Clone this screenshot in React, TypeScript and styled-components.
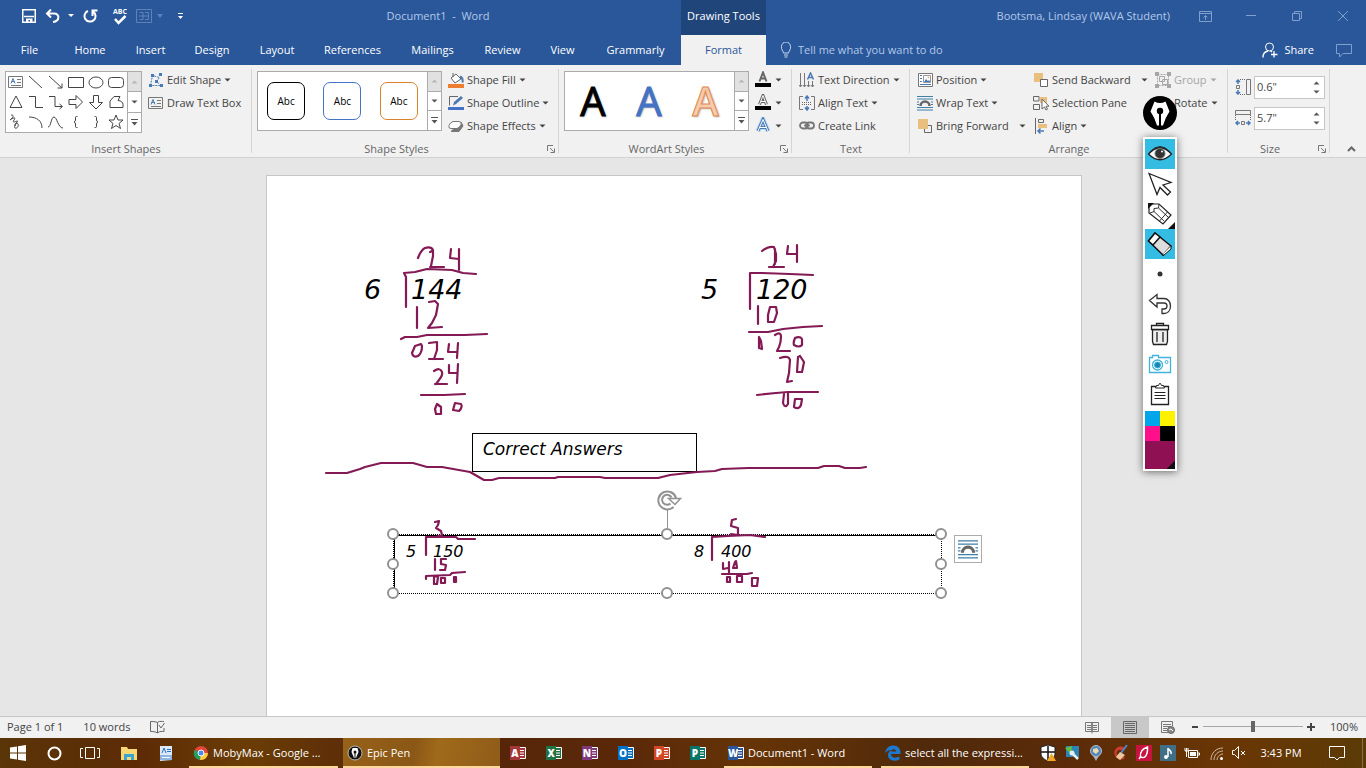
import React from "react";
import styled, { createGlobalStyle } from "styled-components";

const GlobalStyle = createGlobalStyle`
  * { box-sizing: border-box; }
  body { margin: 0; background: #e6e6e6; font: 11px/16px "Open Sans", "Noto Sans", sans-serif; color: #444; }
  button, input { font: inherit; color: inherit; margin: 0; }
  svg { display: block; flex: none; }
`;

const Window = styled.div`
  display: flex;
  flex-direction: column;
  min-height: 100vh;
  position: relative;
  overflow: hidden;
`;

const PlainButton = styled.button`
  display: flex;
  align-items: center;
  justify-content: center;
  padding: 0;
  border: 0;
  background: none;
  white-space: nowrap;
`;

/* ---------- title bar and tabs ---------- */

const TitleBar = styled.header`
  display: flex;
  height: 35px;
  background: #2a579a;
  color: #b3c8e8;
`;
const TitleLeft = styled.div`
  display: flex;
  flex: none;
  width: 681px;
`;
const QuickAccess = styled.div`
  display: flex;
  width: 195px;
  height: 32px;
  padding-left: 19px;
`;
const QuickButton = styled(PlainButton)<{ $w: number }>`
  width: ${(p) => p.$w}px;
  color: #fff;
`;
const DocTitle = styled.div`
  flex: 1;
  line-height: 32px;
  text-align: center;
  white-space: pre;
`;
const ContextTitle = styled.div`
  width: 85px;
  background: #20457b;
  color: #fff;
  line-height: 32px;
  text-align: center;
  white-space: nowrap;
`;
const UserName = styled.div`
  flex: 1;
  padding-right: 12px;
  line-height: 32px;
  text-align: right;
`;
const WindowButton = styled(PlainButton)`
  width: 46px;
  height: 32px;
  color: #7f9fcf;
`;
const TabBar = styled.nav`
  display: flex;
  height: 30px;
  background: #2a579a;
  color: #fff;
`;
const Tab = styled(PlainButton)<{ $w: number; $active?: boolean }>`
  width: ${(p) => p.$w}px;
  background: ${(p) => (p.$active ? "#f1f1f1" : "none")};
  color: ${(p) => (p.$active ? "#2a579a" : "#fff")};
`;
const TellMe = styled.label`
  display: flex;
  flex: 1;
  align-items: center;
  gap: 6px;
  padding-left: 14px;
`;
const TellInput = styled.input`
  width: 200px;
  padding: 0;
  border: 0;
  outline: 0;
  background: none;
  &::placeholder { color: #b3c8e8; opacity: 1; }
`;
const ShareButton = styled(PlainButton)`
  gap: 6px;
  margin-right: 22px;
  color: #fff;
`;
const CommentButton = styled(PlainButton)`
  margin-right: 14px;
  color: #7f9fcf;
`;

/* ---------- ribbon ---------- */

const Ribbon = styled.section`
  display: flex;
  height: 93px;
  background: #f1f1f1;
  border-bottom: 1px solid #d2d2d2;
`;
const Group = styled.div<{ $w: number }>`
  position: relative;
  display: flex;
  flex-direction: column;
  flex: none;
  width: ${(p) => p.$w}px;
  padding-top: 3px;
  &::after {
    content: "";
    position: absolute;
    right: 0;
    top: 4px;
    bottom: 4px;
    width: 1px;
    background: #d5d5d5;
  }
`;
const GroupBody = styled.div<{ $left: number; $centered?: boolean }>`
  display: flex;
  align-items: ${(p) => (p.$centered ? "center" : "flex-start")};
  height: 69px;
  padding-left: ${(p) => p.$left}px;
`;
const GroupFooter = styled.div<{ $launcher?: boolean }>`
  display: flex;
  align-items: center;
  height: 16px;
  margin-top: 4px;
  padding-right: ${(p) => (p.$launcher ? 4 : 0)}px;
  color: #666;
`;
const GroupName = styled.span<{ $launcher?: boolean }>`
  flex: 1;
  padding-right: ${(p) => (p.$launcher ? 6 : 0)}px;
  text-align: center;
`;
const Column = styled.div<{ $w?: number; $gap?: number }>`
  display: flex;
  flex-direction: column;
  align-items: flex-start;
  width: ${(p) => (p.$w ? p.$w + "px" : "auto")};
  margin-left: ${(p) => p.$gap || 0}px;
`;
const CommandButton = styled(PlainButton)<{ $muted?: boolean }>`
  width: 100%;
  justify-content: flex-start;
  gap: 3px;
  height: 23px;
  color: ${(p) => (p.$muted ? "#a6a6a6" : "#444")};
`;
const SplitCaret = styled.span`
  margin-left: auto;
`;
const Gallery = styled.div<{ $w: number; $h: number }>`
  display: flex;
  width: ${(p) => p.$w}px;
  height: ${(p) => p.$h}px;
  margin-top: 3px;
  border: 1px solid #ababab;
  background: #fff;
`;
const GalleryItems = styled.div`
  display: flex;
  flex: 1;
  align-items: center;
  justify-content: space-around;
  color: #000;
`;
const ShapeGrid = styled.div`
  display: grid;
  flex: 1;
  grid-template-columns: repeat(6, 20px);
  grid-template-rows: repeat(3, 20px);
`;
const GalleryScroll = styled.div`
  display: flex;
  flex-direction: column;
  width: 14px;
  border-left: 1px solid #ababab;
`;
const ScrollButton = styled(PlainButton)<{ $off?: boolean }>`
  flex: 1;
  background: ${(p) => (p.$off ? "#e1e1e1" : "#fff")};
  color: ${(p) => (p.$off ? "#b8b8b8" : "#555")};
  & + & { border-top: 1px solid #ababab; }
`;
const StyleSwatch = styled(PlainButton)<{ $line: string }>`
  width: 38px;
  height: 38px;
  border: 1px solid ${(p) => p.$line};
  border-radius: 7px;
  background: #fff;
  color: #000;
  font-size: 10px;
`;
const ArtLetter = styled(PlainButton)<{ $fill: string; $line?: string }>`
  height: 50px;
  color: ${(p) => p.$fill};
  font-size: 40px;
  font-weight: ${(p) => (p.$line ? 600 : 400)};
  line-height: 50px;
  text-shadow: 1px 1px 2px #aaa;
  -webkit-text-stroke: 1px ${(p) => p.$line || p.$fill};
`;
const SizeRow = styled.label`
  display: flex;
  align-items: center;
  gap: 3px;
  height: 31px;
`;
const SizeBox = styled.span`
  display: flex;
  width: 71px;
  height: 23px;
  border: 1px solid #c6c6c6;
  background: #fff;
`;
const SizeInput = styled.input`
  width: 58px;
  padding: 0 2px;
  border: 0;
  outline: 0;
  background: none;
`;
const Stepper = styled.span`
  display: flex;
  flex-direction: column;
  justify-content: center;
  gap: 5px;
  color: #555;
`;
const CollapseButton = styled(PlainButton)`
  align-self: flex-end;
  width: 20px;
  height: 16px;
  margin: 0 5px 0 auto;
`;

/* ---------- document ---------- */

const Workspace = styled.main`
  display: flex;
  flex: 1;
  justify-content: center;
  padding: 17px 18px 0 0;
`;
const Page = styled.article`
  position: relative;
  width: 816px;
  min-height: 541px;
  border: 1px solid #c6c6c6;
  border-bottom: 0;
  background: #fff;
  color: #000;
  font-family: "DejaVu Sans", sans-serif;
  font-style: italic;
`;
const Figure = styled.span<{ $x: number; $y: number; $size: number }>`
  position: absolute;
  left: ${(p) => p.$x}px;
  top: ${(p) => p.$y}px;
  font-size: ${(p) => p.$size}px;
  line-height: 36px;
`;
const TextBox = styled.div`
  position: absolute;
  left: 205px;
  top: 257px;
  width: 225px;
  height: 39px;
  padding: 2px 10px;
  border: 1px solid #000;
  font-size: 17px;
  line-height: 26px;
  white-space: nowrap;
`;
const SelectedBox = styled.div`
  position: absolute;
  left: 126px;
  top: 358px;
  width: 549px;
  height: 60px;
  border: 1px dotted #000;
  box-shadow: inset 1px 1px 0 #000;
`;
const Handle = styled.span<{ $x: number; $y: number }>`
  position: absolute;
  left: ${(p) => p.$x}px;
  top: ${(p) => p.$y}px;
  width: 12px;
  height: 12px;
  border: 2px solid #919191;
  border-radius: 50%;
  background: #fff;
`;
const RotateHandle = styled.svg`
  position: absolute;
  left: 387px;
  top: 312px;
`;
const LayoutOptions = styled(PlainButton)`
  position: absolute;
  left: 687px;
  top: 359px;
  width: 28px;
  height: 28px;
  border: 1px solid #ababab;
  background: #fff;
`;
const Ink = styled.svg`
  position: absolute;
  left: 0;
  top: 0;
  pointer-events: none;
`;

/* ---------- floating pen palette ---------- */

const Palette = styled.aside`
  position: absolute;
  top: 96px;
  right: 189px;
  display: flex;
  flex-direction: column;
  align-items: center;
  gap: 7px;
`;
const PaletteTools = styled.div`
  display: flex;
  flex-direction: column;
  width: 34px;
  padding: 2px;
  background: #fff;
  box-shadow: 0 1px 8px rgba(0, 0, 0, 0.55);
`;
const PaletteButton = styled(PlainButton)<{ $on?: boolean }>`
  height: 30px;
  background: ${(p) => (p.$on ? "#35bce2" : "#fff")};
`;
const Swatches = styled.div`
  display: grid;
  grid-template-columns: 1fr 1fr;
  grid-template-rows: 15px 15px 28px;
  margin-top: 2px;
`;
const Swatch = styled.button<{ $c: string; $wide?: boolean }>`
  padding: 0;
  border: 0;
  background: ${(p) => p.$c};
  grid-column: ${(p) => (p.$wide ? "1 / 3" : "auto")};
`;

/* ---------- status bar ---------- */

const StatusBar = styled.footer`
  display: flex;
  align-items: center;
  height: 22px;
  padding: 0 8px 2px 7px;
  border-top: 1px solid #c6c6c6;
  background: #f1f1f1;
`;
const StatusText = styled.span`
  margin-right: 20px;
`;
const ViewButton = styled(PlainButton)<{ $on?: boolean }>`
  width: 38px;
  height: 21px;
  margin-bottom: -2px;
  background: ${(p) => (p.$on ? "#c8c8c8" : "none")};
`;
const ZoomButton = styled(PlainButton)`
  width: 16px;
  height: 20px;
`;
const ZoomSlider = styled.input`
  appearance: none;
  width: 100px;
  height: 12px;
  background: linear-gradient(#a6a6a6, #a6a6a6) center / 100% 1px no-repeat;
  &::-webkit-slider-thumb { appearance: none; width: 4px; height: 11px; background: #666; }
`;
const ZoomValue = styled.span`
  width: 39px;
  text-align: right;
`;

/* ---------- task bar ---------- */

const TaskBar = styled.footer`
  display: flex;
  height: 30px;
  background: linear-gradient(90deg, #5a3507 0, #5c2b06 10%, #6b3d05 18%, #54240a 30%, #5a2809 45%, #663406 55%, #4f2a0b 68%, #5b2b09 78%, #6a3604 90%, #5b3b06 100%);
  color: #fff;
`;
const TaskIcon = styled(PlainButton)<{ $w?: number }>`
  width: ${(p) => p.$w || 36}px;
`;
const TaskButton = styled(PlainButton)<{ $w: number; $gap: number; $on?: boolean }>`
  justify-content: flex-start;
  gap: 4px;
  width: ${(p) => p.$w}px;
  margin-left: ${(p) => p.$gap}px;
  padding: 2px 0 0 4px;
  border-bottom: 2px solid #fcd89c;
  background: ${(p) => (p.$on ? "linear-gradient(100deg, #976219, #8a5716 45%, #a06a1a 60%, #8f5c1a)" : "none")};
  color: #fff;
`;
const Tray = styled.div`
  display: flex;
  align-items: center;
  margin-left: auto;
`;
const Clock = styled.span`
  width: 62px;
  line-height: 30px;
  text-align: center;
`;
const ShowDesktop = styled(PlainButton)`
  width: 4px;
  height: 30px;
  border-left: 1px solid #8b6c47;
`;

/* ---------- drawings ---------- */

type SvgProps = { w?: number; h?: number; box?: string; children: React.ReactNode };
const Icon = ({ w = 16, h = 16, box, children }: SvgProps) => (
  <svg width={w} height={h} viewBox={box || `0 0 ${w} ${h}`} fill="none" stroke="currentColor" strokeWidth="1" aria-hidden="true">
    {children}
  </svg>
);
const Caret = () => (
  <Icon w={7} h={4}><path d="M.5 .5h6L3.5 3.5z" fill="currentColor" stroke="none" /></Icon>
);
const CaretUp = () => (
  <Icon w={7} h={4}><path d="M.5 3.5h6L3.5 .5z" fill="currentColor" stroke="none" /></Icon>
);
const MoreCaret = () => (
  <Icon w={7} h={7}><path d="M0 .5h7" /><path d="M.5 3h6L3.5 6.5z" fill="currentColor" stroke="none" /></Icon>
);
const Launcher = () => (
  <Icon w={8} h={8}><path d="M.5 6V.5H6M3 3l3.5 3.5M7.5 3.5v4h-4" stroke="#777" /></Icon>
);

const blue = "#4a7ab5";
const tan = "#e8bf7c";

const shapes = [
  <><path d="M.5 2.5h14v11H.5zM9 5.5h4M9 8.5h4M3 11.5h10" stroke="#777" /><path d="M3 9.5l2-5 2 5M3.5 7.5h3" stroke={blue} /></>,
  <path d="M1 2l13 12" />,
  <path d="M1 2l13 12M14 9.5V14H9.5" />,
  <path d="M.5 3.5h15v10H.5z" />,
  <ellipse cx="8" cy="8.5" rx="7" ry="5.5" />,
  <rect x=".5" y="3.5" width="15" height="10" rx="3" />,
  <path d="M8 2L2 13.5h12z" />,
  <path d="M1 2.5h6.5v11H15" />,
  <path d="M1 2.5h6v10h7M11.5 10l3 2.5-3 2.5" />,
  <path d="M1 5.5h7v-4l6.5 6.5L8 14.5v-4H1z" />,
  <path d="M5.5 1.5h5v7h4L8 15 1.5 8.5h4z" />,
  <path d="M2 13.5V7l4-4.5h6l-2 4c3 0 5 2 5 4v3z" />,
  <path d="M3 1c5 0 0 4-1 5 4-3 6-3 4 0s1 2 3 1-4 6-2 7 4-2 3-4-4 0-3 2" />,
  <path d="M1 3c8 0 13 4 13 11" />,
  <path d="M0 13c3 0 3-10 6-10s4 11 9 11" />,
  <path d="M9.500 2.500h-1q-1 0-1 1V6q0 1.500-1.500 2 1.500.5 1.500 2v2.500q0 1 1 1h1" />,
  <path d="M6.500 2.500h1q1 0 1 1V6q0 1.500 1.500 2-1.500.5-1.500 2v2.500q0 1-1 1h-1" />,
  <path d="M8 1l2 5h5l-4 3.5 1.5 5L8 11.5l-4.5 3 1.5-5L1 6h5z" />,
];

const EditShapeIcon = () => (
  <Icon><path d="M2.5 13.5l2-10 7 2-3 4 5 4z" strokeDasharray="2 1" stroke={blue} /><path d="M1 12h3v3H1zM3 2h3v3H3zM11 1h3v3h-3zM7 8h3v3H7zM12 12h3v3h-3z" fill={blue} stroke="none" /></Icon>
);
const TextBoxIcon = () => <Icon>{shapes[0]}</Icon>;
const FillIcon = () => (
  <Icon><path d="M3 6l5-4 5 5-6 4zM5 5V1" stroke="#666" fill="#fff" /><path d="M12 4.5c3 1 3 3 2.5 6" stroke={blue} strokeWidth="2" /><path d="M0 12h16v4H0z" fill="#ed7d31" stroke="none" /></Icon>
);
const OutlineIcon = () => (
  <Icon><path d="M10 1.5H1.5v9" stroke="#666" /><path d="M5 10.5l1-3.5 7-6 2 2-7 6z" fill={blue} stroke="none" /><path d="M0 12h16v3H0z" fill="#4472c4" stroke="none" /></Icon>
);
const EffectsIcon = () => (
  <Icon><path d="M3 13.5h8l4-5.500-2-4z" fill="#777" stroke="#777" /><path d="M5 3.5h6q3 0 2 3t-4 4H3q-3 0-2-3t4-4z" fill="#fff" stroke="#777" /></Icon>
);

const smallA = "M4.5 10.5L8 1.5l3.5 9M6 7.5h4";
const largeA = "M3 14L8 2.5 13 14M5 10.5h6";
const LetterIcon = ({ kind }: { kind: "fill" | "line" | "glow" }) => (
  <Icon h={17}>
    {kind === "glow" && <path d={largeA} stroke="#b9d8f3" strokeWidth="5" />}
    <path d={kind === "glow" ? largeA : smallA} stroke={kind === "glow" ? blue : "#666"} strokeWidth={kind === "fill" ? 2 : 3} />
    {kind !== "fill" && <path d={kind === "glow" ? largeA : smallA} stroke="#fff" />}
    {kind !== "glow" && <path d="M0 12h16v4H0z" fill="#000" stroke="none" />}
  </Icon>
);
const DirectionIcon = () => (
  <Icon><path d="M1.5 1v13M5.5 1v13M9.5 9v6M13.5 9v6M0 13l1.5 2L3 13M4 13l1.5 2L7 13M8 13l1.5 2 1.5-2M12 13l1.5 2 1.5-2" stroke="#777" /><path d="M8.5 7.5l3-6.5 3 6.5M10 5.5h3" stroke={blue} strokeWidth="1.5" /></Icon>
);
const AlignTextIcon = () => (
  <Icon><path d="M4 1.5H.5v13H4M12 1.5h3.5v13H12" stroke="#777" /><path d="M3 7.5h10M3 9.5h10" stroke="#666" strokeDasharray="1 1" /><path d="M8 6V1M6 3.5L8 1l2 2.5M8 11v4M6 12.5L8 15l2-2.5" stroke={blue} strokeWidth="1.5" /></Icon>
);
const LinkIcon = () => (
  <Icon><rect x="1" y="4.500" width="8" height="6" rx="3" stroke="#777" strokeWidth="1.8" /><rect x="7" y="4.500" width="8" height="6" rx="3" stroke="#777" strokeWidth="1.8" /><path d="M5 7.500h6" stroke="#777" strokeWidth="1.5" /></Icon>
);
const PositionIcon = () => (
  <Icon><path d="M1.5 1.5h14v13h-14z" stroke="#777" fill="#fff" /><path d="M3 3.5h2M3 6.5h2M3 9.5h2M3 12.5h11" stroke={blue} /><path d="M6.5 3.5h7v7h-7z" stroke="#999" /><path d="M7 10l2-3 2 2 1-1 1.5 2z" fill={blue} stroke="none" /><circle cx="11.5" cy="5.5" r="1" fill={tan} stroke="none" /></Icon>
);
const WrapIcon = ({ size = 16 }: { size?: number }) => (
  <Icon w={size} h={size} box="0 0 16 16"><path d="M0 1.5h16M0 4h16M0 12.5h16M0 15h16M0 7h2M14 7h2M0 9.5h2M14 9.5h2" stroke="#3f7fa8" /><path d="M3.5 11a4.5 4.5 0 019 0" stroke="#666" strokeWidth="2.5" /></Icon>
);
const ForwardIcon = () => (
  <Icon><path d="M7.5 11v3.5h7v-7H11" stroke="#666" /><path d="M1 1h10v10H1z" fill={tan} stroke="none" /></Icon>
);
const BackwardIcon = () => (
  <Icon><path d="M1 1h9v9H1z" fill={tan} stroke="none" /><path d="M7.5 7.5h7v7h-7z" fill="#fff" stroke="#666" /></Icon>
);
const SelectionIcon = () => (
  <Icon><path d="M7 2h7v6H7z" fill={tan} stroke="none" /><path d="M.5 9.5h6v5h-6zM.5 6V1.5H6V6z" stroke="#666" /><path d="M9 4v10l2.5-2 1.5 3 1.5-.8-1.5-3H16z" fill="#fff" stroke="#666" /></Icon>
);
const AlignIcon = () => (
  <Icon><path d="M2.5 0v16M5.5 1.5h5v3h-5z" stroke="#666" /><path d="M5 6h9v4H5z" fill={tan} stroke="none" /><path d="M11 13H5m2.5-2.5L5 13l2.5 2.5" stroke={blue} strokeWidth="1.5" /></Icon>
);
const GroupIcon = () => (
  <Icon><path d="M2.5 2.5h11v11h-11z" strokeDasharray="2 1" /><path d="M4.5 4.5h5v5h-5zM7.5 7.5h5v5h-5z" /><path d="M0 0h4v4H0zM12 0h4v4h-4zM0 12h4v4H0zM12 12h4v4h-4z" fill="currentColor" stroke="none" /></Icon>
);
const HeightIcon = () => (
  <Icon><path d="M5 .5h6M5 15.5h6" strokeDasharray="1 1" stroke="#666" /><path d="M11.5 .5h4v15h-4zM1.5 6.5h3v3h-3z" stroke="#777" /><path d="M3 5V1M1 3l2-2 2 2M3 11v4M1 13l2 2 2-2" stroke={blue} strokeWidth="1.5" /></Icon>
);
const WidthIcon = () => (
  <Icon><path d="M.5 5v6M15.5 5v6" strokeDasharray="1 1" stroke="#666" /><path d="M.5 .5h15v4H.5zM6.5 11.5h3v3h-3z" stroke="#777" /><path d="M5 13H1M3 11l-2 2 2 2M11 13h4M13 11l2 2-2 2" stroke={blue} strokeWidth="1.5" /></Icon>
);

const ink = [
  "M418 258Q421 250 425 248Q431 246 433 250L433 256 431 266M430 267L444 267M430 252L432 251",
  "M451 249L450 258 459 259M459 249L459 270",
  "M406 307L406 277 404 273 415 272 427 269 452 270 463 273 476 274",
  "M417 307L417 328M429 302L435 301 438 304 436 315 432 323 428 328 442 327",
  "M401 339L405 337 417 337 427 335 465 335 487 334",
  "M421 344L415 346 412 353Q413 358 418 356Q422 353 422 346zM429 343L437 342 437 350 434 359M429 359L443 359M449 344L448 352 457 352M458 343L457 358",
  "M434 371Q440 367 442 372Q443 375 439 380L436 384M435 384L447 384M449 365L449 373 457 373M458 364L457 383",
  "M421 395L444 395 465 394",
  "M437 404L435 409 436 414 441 414 441 407zM455 403L453 410 459 411Q463 407 461 404z",
  "M762 251Q768 246 774 247L776 254 776 261 773 267M769 267L784 267M788 246L787 254 796 254M797 245L797 262M775 249L775 264",
  "M750 309L750 273 762 273 790 274 813 275",
  "M758 306L758 324M770 307L768 315 768 322 774 322 777 313 776 307z",
  "M749 332L768 332 783 329 803 327 822 326",
  "M759 337L759 348 762 349 761 341zM775 335Q781 331 781 337Q781 342 779 347L777 351 790 351M795 338Q793 343 794 345Q799 348 802 345L802 339Q800 336 795 338",
  "M780 358Q789 355 790 360L789 373 787 382 792 381M798 357L797 372 802 372 804 362 800 356z",
  "M757 395L776 393 788 392 818 392",
  "M784 394L783 403Q785 409 788 404L788 393M795 399L794 407Q799 410 801 405L802 399z",
  "M326 473L347 473 360 469 365 467 381 463 413 463 427 467 442 467 470 472 484 480 492 480 499 478 555 478 558 477 600 477 605 478 658 478 670 475 697 472 715 471 722 469 748 468 818 468 824 466 839 466 845 468 860 468 866 467",
  "M435 522L439 521 438 525 436 528 441 531 442 535 436 537",
  "M426 555L426 537 456 537 458 539 475 539",
  "M435 559L435 570M446 559L441 559 441 564 446 565 445 570 440 570",
  "M426 579L426 576 450 575 452 573 465 572",
  "M434 576L434 584 437 584 438 577zM441 578L441 583 445 583 445 578zM454 577L454 582 456 582 456 577z",
  "M736 519L732 520 731 526 738 528 738 535 731 534",
  "M712 560L712 537 728 536 750 535 765 537",
  "M723 563L723 569 728 568M729 562L729 573M735 562L733 568 737 568 736 561z",
  "M722 574L747 574 752 573",
  "M727 577L727 582 730 582 730 577zM737 576L737 582 742 582 742 576zM752 578L752 586 757 586 758 578z",
];

const handles = [
  [-7, -7], [267, -7], [541, -7],
  [-7, 23], [541, 23],
  [-7, 52], [267, 52], [541, 52],
];

const tabs: [string, number][] = [
  ["File", 59], ["Home", 62], ["Insert", 59], ["Design", 64], ["Layout", 66],
  ["References", 85], ["Mailings", 75], ["Review", 65], ["View", 55], ["Grammarly", 91],
];

const officeApps: [string, string, string][] = [
  ["A", "#a4373a", "Access"], ["X", "#217346", "Excel"], ["N", "#80397b", "OneNote"],
  ["O", "#0072c6", "Outlook"], ["P", "#d24726", "PowerPoint"], ["P", "#077568", "Publisher"],
];

const AppTile = styled.span<{ $c: string }>`
  display: flex;
  align-items: center;
  color: #fff;
  font-size: 10px;
  font-weight: 700;
  line-height: 14px;
  & > b { width: 10px; background: ${(p) => p.$c}; text-align: center; }
`;
const OfficeTile = ({ letter, color }: { letter: string; color: string }) => (
  <AppTile $c={color}>
    <b>{letter}</b>
    <Icon w={6} h={12}><path d="M0 .5h5.5v11H0" fill={color} stroke="#fff" /><path d="M0 3.5h4M0 6h4M0 8.5h4" stroke="#fff" /></Icon>
  </AppTile>
);

type CommandProps = { icon?: React.ReactNode; text: string; caret?: boolean; split?: boolean; muted?: boolean };
const Command = ({ icon, text, caret, split, muted }: CommandProps) => (
  <CommandButton $muted={muted}>
    {icon}
    {text}
    {caret && <Caret />}
    {split && <SplitCaret><Caret /></SplitCaret>}
  </CommandButton>
);
const Scroller = () => (
  <GalleryScroll>
    <ScrollButton $off aria-label="Previous row"><CaretUp /></ScrollButton>
    <ScrollButton aria-label="Next row"><Caret /></ScrollButton>
    <ScrollButton aria-label="More"><MoreCaret /></ScrollButton>
  </GalleryScroll>
);
const Footer = ({ name, launcher }: { name: string; launcher?: boolean }) => (
  <GroupFooter $launcher={launcher}><GroupName $launcher={launcher}>{name}</GroupName>{launcher && <Launcher />}</GroupFooter>
);

const WordRibbon = () => (
  <Ribbon>
    <Group $w={252}>
      <GroupBody $left={5}>
        <Gallery $w={137} $h={62}>
          <ShapeGrid>
            {shapes.map((shape, i) => (
              <PlainButton key={i} aria-label={`Shape ${i + 1}`}><Icon>{shape}</Icon></PlainButton>
            ))}
          </ShapeGrid>
          <Scroller />
        </Gallery>
        <Column $gap={6}>
          <Command icon={<EditShapeIcon />} text="Edit Shape" caret />
          <Command icon={<TextBoxIcon />} text="Draw Text Box" />
        </Column>
      </GroupBody>
      <Footer name="Insert Shapes" />
    </Group>
    <Group $w={307}>
      <GroupBody $left={5}>
        <Gallery $w={185} $h={60}>
          <GalleryItems>
            <StyleSwatch $line="#000">Abc</StyleSwatch>
            <StyleSwatch $line="#4472c4">Abc</StyleSwatch>
            <StyleSwatch $line="#d9822b">Abc</StyleSwatch>
          </GalleryItems>
          <Scroller />
        </Gallery>
        <Column $gap={6}>
          <Command icon={<FillIcon />} text="Shape Fill" caret />
          <Command icon={<OutlineIcon />} text="Shape Outline" caret />
          <Command icon={<EffectsIcon />} text="Shape Effects" caret />
        </Column>
      </GroupBody>
      <Footer name="Shape Styles" launcher />
    </Group>
    <Group $w={233}>
      <GroupBody $left={5}>
        <Gallery $w={185} $h={60}>
          <GalleryItems>
            <ArtLetter $fill="#000">A</ArtLetter>
            <ArtLetter $fill="#4472c4">A</ArtLetter>
            <ArtLetter $fill="#f8cbad" $line="#e08a4f">A</ArtLetter>
          </GalleryItems>
          <Scroller />
        </Gallery>
        <Column $gap={6} $w={27}>
          <CommandButton aria-label="Text Fill"><LetterIcon kind="fill" /><SplitCaret><Caret /></SplitCaret></CommandButton>
          <CommandButton aria-label="Text Outline"><LetterIcon kind="line" /><SplitCaret><Caret /></SplitCaret></CommandButton>
          <CommandButton aria-label="Text Effects"><LetterIcon kind="glow" /><SplitCaret><Caret /></SplitCaret></CommandButton>
        </Column>
      </GroupBody>
      <Footer name="WordArt Styles" launcher />
    </Group>
    <Group $w={118}>
      <GroupBody $left={7}>
        <Column>
          <Command icon={<DirectionIcon />} text="Text Direction" caret />
          <Command icon={<AlignTextIcon />} text="Align Text" caret />
          <Command icon={<LinkIcon />} text="Create Link" />
        </Column>
      </GroupBody>
      <Footer name="Text" />
    </Group>
    <Group $w={318}>
      <GroupBody $left={7}>
        <Column $w={109}>
          <Command icon={<PositionIcon />} text="Position" caret />
          <Command icon={<WrapIcon />} text="Wrap Text" caret />
          <Command icon={<ForwardIcon />} text="Bring Forward" split />
        </Column>
        <Column $w={115} $gap={7}>
          <Command icon={<BackwardIcon />} text="Send Backward" split />
          <Command icon={<SelectionIcon />} text="Selection Pane" />
          <Command icon={<AlignIcon />} text="Align" caret />
        </Column>
        <Column $gap={7}>
          <Command icon={<GroupIcon />} text="Group" caret muted />
          <Command icon={<Icon><path d="M2 14L13 3v11z" /></Icon>} text="Rotate" caret />
        </Column>
      </GroupBody>
      <Footer name="Arrange" />
    </Group>
    <Group $w={102}>
      <GroupBody $left={7} $centered>
        <Column>
          <SizeRow><HeightIcon />
            <SizeBox><SizeInput defaultValue={'0.6"'} aria-label="Shape height" /><Stepper><CaretUp /><Caret /></Stepper></SizeBox>
          </SizeRow>
          <SizeRow><WidthIcon />
            <SizeBox><SizeInput defaultValue={'5.7"'} aria-label="Shape width" /><Stepper><CaretUp /><Caret /></Stepper></SizeBox>
          </SizeRow>
        </Column>
      </GroupBody>
      <Footer name="Size" launcher />
    </Group>
    <CollapseButton aria-label="Collapse the ribbon"><Icon w={9} h={6}><path d="M1 5l3.5-3.5L8 5" strokeWidth="2" stroke="#666" /></Icon></CollapseButton>
  </Ribbon>
);

const PenPalette = () => (
  <Palette>
    <PlainButton aria-label="Epic Pen menu">
      <Icon w={34} h={34}>
        <circle cx="17" cy="17" r="17" fill="#000" stroke="none" />
        <path d="M11.5 5.5q5.5 3 11 0l4 10Q22 22 20 29.5h-6Q12 22 7.5 15.5z" fill="#fff" stroke="none" />
        <path d="M17 15v15" stroke="#000" strokeWidth="2" /><circle cx="17" cy="15" r="3.2" fill="#000" stroke="none" />
      </Icon>
    </PlainButton>
    <PaletteTools>
      <PaletteButton $on aria-label="Show ink">
        <Icon w={26} h={22}><path d="M1.5 11Q13-1.5 24.5 11 13 22.5 1.5 11z" fill="#fff" stroke="#222" strokeWidth="1.3" /><circle cx="13" cy="10.5" r="5" fill="#333" stroke="#777" strokeWidth="1" /><path d="M3 9Q13-2 23 9" stroke="#222" strokeWidth="1" /><circle cx="15" cy="8.5" r="1" fill="#fff" stroke="none" /></Icon>
      </PaletteButton>
      <PaletteButton aria-label="Cursor">
        <Icon w={26} h={26}><path d="M2 2.5l22 9-8 2.5 7.5 7-3 3-7.5-7.5-3 7z" fill="#fff" stroke="#222" strokeWidth="1.3" /></Icon>
      </PaletteButton>
      <PaletteButton aria-label="Pen">
        <Icon w={30} h={30}><path d="M4 5h10l12 11-8 9L4 14z" fill="#fff" stroke="#222" strokeWidth="1.2" /><path d="M5 14l4-1.500v-3l4.500-.5.500-4M9 12.500l10 9.500M13.500 9l10 9.500M22.500 13l-8 9" stroke="#333" /><path d="M3 4h6L3 10z" fill="#111" stroke="none" /><path d="M30 23v7h-7z" fill="#111" stroke="none" /></Icon>
      </PaletteButton>
      <PaletteButton $on aria-label="Eraser">
        <Icon w={26} h={26}><path d="M8 2l16 13-8 9L1.5 10z" fill="#ddd" stroke="#111" strokeWidth="1.5" /><path d="M8 2l5 4-7 8-4.5-4z" fill="#fff" stroke="#111" strokeWidth="1.5" /><path d="M24 15v3l-8 7v-2" fill="#fff" stroke="#111" /></Icon>
      </PaletteButton>
      <PaletteButton aria-label="Pen size"><Icon w={6} h={6}><circle cx="3" cy="3" r="2.5" fill="#333" stroke="none" /></Icon></PaletteButton>
      <PaletteButton aria-label="Undo ink">
        <Icon w={24} h={22}><path d="M1.5 7.5L9 1.5v4h7c4 0 6.5 3.5 6.5 7.5 0 5-3 7.5-6.5 7.5h-2V16h2c2 0 3-1 3-3s-1-3-3-3H9v4z" fill="#fff" stroke="#333" strokeWidth="1.3" /></Icon>
      </PaletteButton>
      <PaletteButton aria-label="Clear screen">
        <Icon w={20} h={24}><path d="M2.5 7.5h15v12l-1 3h-13l-1-3z" fill="#eee" stroke="#222" strokeWidth="1.3" /><path d="M1.5 3.5h17v4h-17z" fill="#fff" stroke="#222" strokeWidth="1.3" /><path d="M6.5 3.5v-2h7v2M7 10v10M13 10v10" stroke="#222" strokeWidth="1.3" /></Icon>
      </PaletteButton>
      <PaletteButton aria-label="Screenshot">
        <Icon w={24} h={20}><path d="M1.5 3.5h3v-2h6v2h12v15h-21z" fill="#fff" stroke="#40b4dc" strokeWidth="1.3" /><circle cx="9.5" cy="11" r="5" stroke="#40b4dc" strokeWidth="1.3" /><circle cx="9.5" cy="11" r="3" fill="#1785ad" stroke="#40b4dc" /><circle cx="18.5" cy="8" r="1.5" stroke="#40b4dc" /></Icon>
      </PaletteButton>
      <PaletteButton aria-label="Clipboard">
        <Icon w={20} h={24}><path d="M1.5 4.5h17v18h-17z" fill="#fff" stroke="#222" strokeWidth="1.3" /><path d="M5.5 6l1-2.5h2l1-2h1l1 2h2l1 2.5z" fill="#fff" stroke="#222" /><path d="M4.5 10.5h11M4.5 13.5h11M4.5 16.5h11" stroke="#222" /></Icon>
      </PaletteButton>
      <Swatches>
        <Swatch $c="#00a5ea" aria-label="Blue" /><Swatch $c="#fff200" aria-label="Yellow" />
        <Swatch $c="#ff0f8b" aria-label="Pink" /><Swatch $c="#000" aria-label="Black" />
        <Swatch $wide $c="linear-gradient(135deg, #8f1154 0 86%, #111 86%)" aria-label="Current colour" />
      </Swatches>
    </PaletteTools>
  </Palette>
);

export default function App() {
  return (
    <Window>
      <GlobalStyle />
      <TitleBar>
        <TitleLeft>
          <QuickAccess>
            <QuickButton $w={20} aria-label="Save"><Icon w={14} h={14}><path d="M.75 .75h12.5v12.5H.75z" strokeWidth="1.5" /><path d="M2 7.5h10" strokeWidth="1.5" /><path d="M4 14V9.5h6.5V14H8v-3H6.5v3z" fill="currentColor" stroke="none" /></Icon></QuickButton>
            <QuickButton $w={29} aria-label="Undo"><Icon w={15} h={14}><path d="M6 .5L2 4.5l4 4M2 4.5h7c6 0 6 7.5-1 8.5" strokeWidth="2" /></Icon></QuickButton>
            <QuickButton $w={9} aria-label="Undo history"><Icon w={6} h={4}><path d="M0 0h6L3 3z" fill="#fff" stroke="none" /></Icon></QuickButton>
            <QuickButton $w={30} aria-label="Redo"><Icon w={15} h={14}><path d="M10 2.5a5.5 5.5 0 11-5-.5M9.500 7V1.5h5" strokeWidth="2" /></Icon></QuickButton>
            <QuickButton $w={30} aria-label="Spelling">
              <Icon w={16} h={18}><text x="8" y="7" textAnchor="middle" fontSize="7" fontWeight="700" fill="currentColor" stroke="none">ABC</text><path d="M3 12l3.5 4 7-7" strokeWidth="2.5" /></Icon>
            </QuickButton>
            <QuickButton $w={20} aria-label="Ink grid"><Icon><path d="M.5 1.5h15v13H.5zM3.5 4.5H7v7H3.5M9 4.5h3.5v7H9M3 8h10" stroke="#5c82ba" /></Icon></QuickButton>
            <QuickButton $w={12} aria-label="Grid options"><Icon w={6} h={4}><path d="M0 0h6L3 4z" fill="#5c82ba" stroke="none" /></Icon></QuickButton>
            <QuickButton $w={30} aria-label="Customize"><Icon w={5} h={6}><path d="M0 .5h5" /><path d="M0 3h5L2.500 6z" fill="currentColor" stroke="none" /></Icon></QuickButton>
          </QuickAccess>
          <DocTitle>{"Document1  -  Word"}</DocTitle>
        </TitleLeft>
        <ContextTitle>Drawing Tools</ContextTitle>
        <UserName>Bootsma, Lindsay (WAVA Student)</UserName>
        <WindowButton aria-label="Ribbon display"><Icon w={13} h={11}><path d="M.5 .5h12v10H.5zM1 2.5h11M6.5 9V4.5M4.5 6.5l2-2 2 2" /></Icon></WindowButton>
        <WindowButton aria-label="Minimize"><Icon w={10} h={2}><path d="M0 .5h10" /></Icon></WindowButton>
        <WindowButton aria-label="Restore"><Icon w={10} h={10}><path d="M.5 2.5h7v7h-7zM2.5 2.5v-2h7v7h-2" /></Icon></WindowButton>
        <WindowButton aria-label="Close"><Icon w={10} h={10}><path d="M0 0l10 10M10 0L0 10" /></Icon></WindowButton>
      </TitleBar>
      <TabBar>
        {tabs.map(([name, w]) => <Tab key={name} $w={w}>{name}</Tab>)}
        <Tab $w={85} $active>Format</Tab>
        <TellMe>
          <Icon w={12} h={16}><path d="M3.5 11C3 8.5 1 7.5 1.5 4.5a4.5 4.5 0 019 0C11 7.5 9 8.5 8.5 11zM4 13h4M4.5 15h3" stroke="#c9d8ee" /></Icon>
          <TellInput placeholder="Tell me what you want to do" aria-label="Tell me what you want to do" />
        </TellMe>
        <ShareButton>
          <Icon><circle cx="7.5" cy="5" r="4" /><path d="M1 15.5c0-4 2-6 5-6.5M8.5 9l1.5 1M12 9v6.5M9 12.5h6.5" strokeWidth="1.3" /></Icon>
          Share
        </ShareButton>
        <CommentButton aria-label="Comments"><Icon w={16} h={15}><path d="M.5 1.5h15v9H7L3.5 14v-3.5h-3z" /></Icon></CommentButton>
      </TabBar>
      <WordRibbon />
      <Workspace>
        <Page>
          <Figure $x={97} $y={96} $size={27}>6</Figure>
          <Figure $x={144} $y={96} $size={27}>144</Figure>
          <Figure $x={434} $y={96} $size={27}>5</Figure>
          <Figure $x={489} $y={96} $size={27}>120</Figure>
          <TextBox>Correct Answers</TextBox>
          <SelectedBox>
            {handles.map(([x, y]) => <Handle key={`${x},${y}`} $x={x} $y={y} />)}
          </SelectedBox>
          <RotateHandle width="28" height="42" viewBox="0 0 28 42" fill="none" stroke="#919191">
            <path d="M13.5 22v18" />
            <path d="M19.5 19a9 9 0 112.5-9" strokeWidth="2" />
            <path d="M16.5 15.5a5 5 0 111-6" strokeWidth="2" />
            <path d="M14.5 10.5h12L21 16.5z" fill="#fff" strokeWidth="1.5" />
          </RotateHandle>
          <LayoutOptions aria-label="Layout options"><WrapIcon size={20} /></LayoutOptions>
          <Figure $x={139} $y={358} $size={16}>5</Figure>
          <Figure $x={166} $y={358} $size={16}>150</Figure>
          <Figure $x={427} $y={358} $size={16}>8</Figure>
          <Figure $x={454} $y={358} $size={16}>400</Figure>
          <Ink width="814" height="540" viewBox="267 176 814 540" fill="none" stroke="#841a55" strokeWidth="2.2" strokeLinecap="round" strokeLinejoin="round">
            {ink.map((d) => <path key={d} d={d} />)}
          </Ink>
        </Page>
      </Workspace>
      <StatusBar>
        <StatusText>Page 1 of 1</StatusText>
        <StatusText>10 words</StatusText>
        <Icon w={15} h={14}><path d="M7.5 2.5c-2-1-5-1-7-1v10c2 0 5 0 7 1.5zM7.5 2.5V13M8 12.5c2-1.5 4-1 6-1V8M8 2c2-1 4-.5 6-.5M9 5l2 3 3.5-5" stroke="#666" /></Icon>
        <Tray>
          <ViewButton aria-label="Read mode"><Icon w={14} h={13}><path d="M7 1.5H.5v9H7zM7 1.5h6.5v9H7zM7 1v11.5M2 4.5h4M2 6.5h4M2 8.5h4M8 4.5h4M8 6.5h4M8 8.5h4" stroke="#777" /></Icon></ViewButton>
          <ViewButton $on aria-label="Print layout"><Icon w={14} h={13}><path d="M.5 .5h13v12H.5zM2 2.5h10M2 4.5h10M2 6.5h10M2 8.5h10M2 10.5h10" stroke="#666" /></Icon></ViewButton>
          <ViewButton aria-label="Web layout"><Icon w={14} h={13}><path d="M7 11.5H.5v-11h11V5M2 3.5h8M2 5.5h7M2 7.5h4M2 9.5h4" stroke="#777" /><circle cx="10" cy="9" r="3.5" fill="#888" stroke="#666" /><path d="M8 9l2-1 2 2" stroke="#fff" /></Icon></ViewButton>
          <ZoomButton aria-label="Zoom out"><Icon w={6} h={2}><path d="M0 1h6" strokeWidth="2" /></Icon></ZoomButton>
          <ZoomSlider type="range" aria-label="Zoom" defaultValue={50} />
          <ZoomButton aria-label="Zoom in"><Icon w={8} h={8}><path d="M0 4h8M4 0v8" strokeWidth="2" /></Icon></ZoomButton>
          <ZoomValue>100%</ZoomValue>
        </Tray>
      </StatusBar>
      <TaskBar>
        <TaskIcon aria-label="Start"><Icon><path d="M0 2.5L7 1.5v6H0zM8 1.3L16 0v7.5H8zM0 8.5h7v6l-7-1zM8 8.5h8V16l-8-1.3z" fill="#fff" stroke="none" /></Icon></TaskIcon>
        <TaskIcon aria-label="Cortana"><Icon w={15} h={15}><circle cx="7.5" cy="7.5" r="6" stroke="#fff" strokeWidth="2" /></Icon></TaskIcon>
        <TaskIcon aria-label="Task view"><Icon w={20} h={14}><path d="M5.5 1.5h9v11h-9zM3 2.5H.5v9H3M17 2.5h2.5v9H17" stroke="#fff" /></Icon></TaskIcon>
        <TaskIcon $w={42} aria-label="File Explorer"><Icon><path d="M0 2h6l1 2h9v11H0z" fill="#f8d775" stroke="none" /><path d="M3 15V9h10v6h-3v-3H6v3z" fill="#3aa5d1" stroke="none" /></Icon></TaskIcon>
        <TaskIcon $w={32} aria-label="WordPad"><Icon w={14} h={15}><path d="M1 0h12v14l-12 1z" fill="#dce9f7" stroke="none" /><path d="M3 7l2-5 2 5M8 3.5h4M8 5.5h4" stroke="#2b6fc2" /><path d="M1 9h12v5H1z" fill="#8fb6e2" stroke="none" /><path d="M3 11.5h8" stroke="#fff" /></Icon></TaskIcon>
        <TaskButton $w={149} $gap={7}>
          <Icon><circle cx="8" cy="8" r="7" fill="#e5443a" stroke="none" /><path d="M8 8L1.5 5A7 7 0 007 15z" fill="#1fa15d" stroke="none" /><path d="M8 8h7A7 7 0 017 15z" fill="#fccd3f" stroke="none" /><circle cx="8" cy="8" r="3" fill="#4a8af4" stroke="#fff" /></Icon>
          MobyMax - Google ...
        </TaskButton>
        <TaskButton $w={157} $gap={5} $on>
          <Icon><circle cx="8" cy="8" r="7" fill="#111" stroke="#bbb" /><path d="M5.5 3h5l1 4-2.5 6H7L4.5 7z" fill="#fff" stroke="none" /><path d="M8 7v6" stroke="#111" /><circle cx="8" cy="7" r="1.5" fill="#111" stroke="none" /></Icon>
          Epic Pen
        </TaskButton>
        {officeApps.map(([letter, color, name]) => (
          <TaskIcon key={name} aria-label={name}><OfficeTile letter={letter} color={color} /></TaskIcon>
        ))}
        <TaskButton $w={148} $gap={8}><OfficeTile letter="W" color="#2b579a" />Document1 - Word</TaskButton>
        <TaskButton $w={148} $gap={9}>
          <Icon><path d="M0 8C1 3 4 .5 8.5 .5 13 .5 16 4 15.5 9H6c0 4 5 4.5 8.5 2.5v3C9 17 3 15.5 3 10c0-2.5 2-4.5 3.5-5C4 5 1.5 6 0 8zm6-1.5h5C11 3.5 6.5 3.5 6 6.5z" fill="#1d79cf" stroke="none" /></Icon>
          select all the expressi...
        </TaskButton>
        <Tray>
          <TaskIcon $w={24} aria-label="Windows Defender"><Icon><path d="M1 2l7-2 7 2v7c0 3-4 6-7 7-3-1-7-4-7-7z" fill="#fff" stroke="#222" /><path d="M8 1v14M1 7h14" stroke="#111" strokeWidth="1.5" /><path d="M11.5 8l4.5 8H7z" fill="#f5a623" stroke="none" /></Icon></TaskIcon>
          <TaskIcon $w={24} aria-label="Updater"><Icon w={14} h={14}><path d="M1 0h13v11H1z" fill="#2c84b5" stroke="none" /><path d="M0 2l7-2-1 8z" fill="#63c043" stroke="none" /><path d="M7 7l6 6" stroke="#e8eef2" strokeWidth="2.5" /><circle cx="7" cy="7" r="2.5" fill="#e8eef2" stroke="none" /></Icon></TaskIcon>
          <TaskIcon $w={24} aria-label="Location"><Icon w={14} h={16}><path d="M3 9l4 7 4-7z" fill="#a7b2bd" stroke="none" /><circle cx="7" cy="6" r="5.5" fill="#4c87c4" stroke="#bbb" /><path d="M4 4l4-1 2 3-3 3-3-2z" fill="#f0d9a8" stroke="none" /></Icon></TaskIcon>
          <TaskIcon $w={24} aria-label="CCleaner"><Icon><path d="M13 3A6.5 6.5 0 1013 13l-3-3a3 3 0 110-4z" fill="#d23b2f" stroke="none" /><path d="M15 0L9 8" stroke="#4b86c6" strokeWidth="2" /><path d="M8 7l5 3-5 5-4-3z" fill="#e8c9a0" stroke="none" /></Icon></TaskIcon>
          <TaskIcon $w={24} aria-label="Leaf"><Icon><path d="M0 0h16v16H0z" fill="#c8133f" stroke="none" /><path d="M11.5 2C6 4 4 8 4.5 11.5c3 3 7.5 0 7-9.5zM3 14l2-3" stroke="#fff" strokeWidth="1.5" /></Icon></TaskIcon>
          <TaskIcon $w={24} aria-label="Music"><Icon><path d="M0 0h16v16H0z" fill="#3f6f86" stroke="none" /><path d="M8 12V3c0 2 4 2 3 6" stroke="#fff" strokeWidth="1.5" /><circle cx="6" cy="12" r="2" fill="#fff" stroke="none" /></Icon></TaskIcon>
          <TaskIcon $w={24} aria-label="Battery"><Icon><path d="M4.5 5.5h9v7h-9zM14 8h1.5v2H14M2.5 3v9M1 3v3h3V3" stroke="#fff" /><path d="M6 7h6v4H6z" fill="#fff" stroke="none" /></Icon></TaskIcon>
          <TaskIcon $w={24} aria-label="Network"><Icon w={13} h={13}><path d="M1 13C1 6 6 1 13 1M4 13c0-5 4-9 9-9M7 13c0-3 3-6 6-6" stroke="#ccb9a4" /><circle cx="11.5" cy="11.5" r="1.5" fill="#fff" stroke="none" /></Icon></TaskIcon>
          <TaskIcon $w={22} aria-label="Volume muted"><Icon><path d="M1.5 5.5h2l4-4v12l-4-4h-2zM10 6l4 4M14 6l-4 4" stroke="#fff" /></Icon></TaskIcon>
          <Clock>3:43 PM</Clock>
          <TaskIcon $w={50} aria-label="Action center"><Icon><path d="M.5 1.5h15v11h-5L8 15l-2.5-2.5h-5z" stroke="#fff" /></Icon></TaskIcon>
          <ShowDesktop aria-label="Show desktop" />
        </Tray>
      </TaskBar>
      <PenPalette />
    </Window>
  );
}
